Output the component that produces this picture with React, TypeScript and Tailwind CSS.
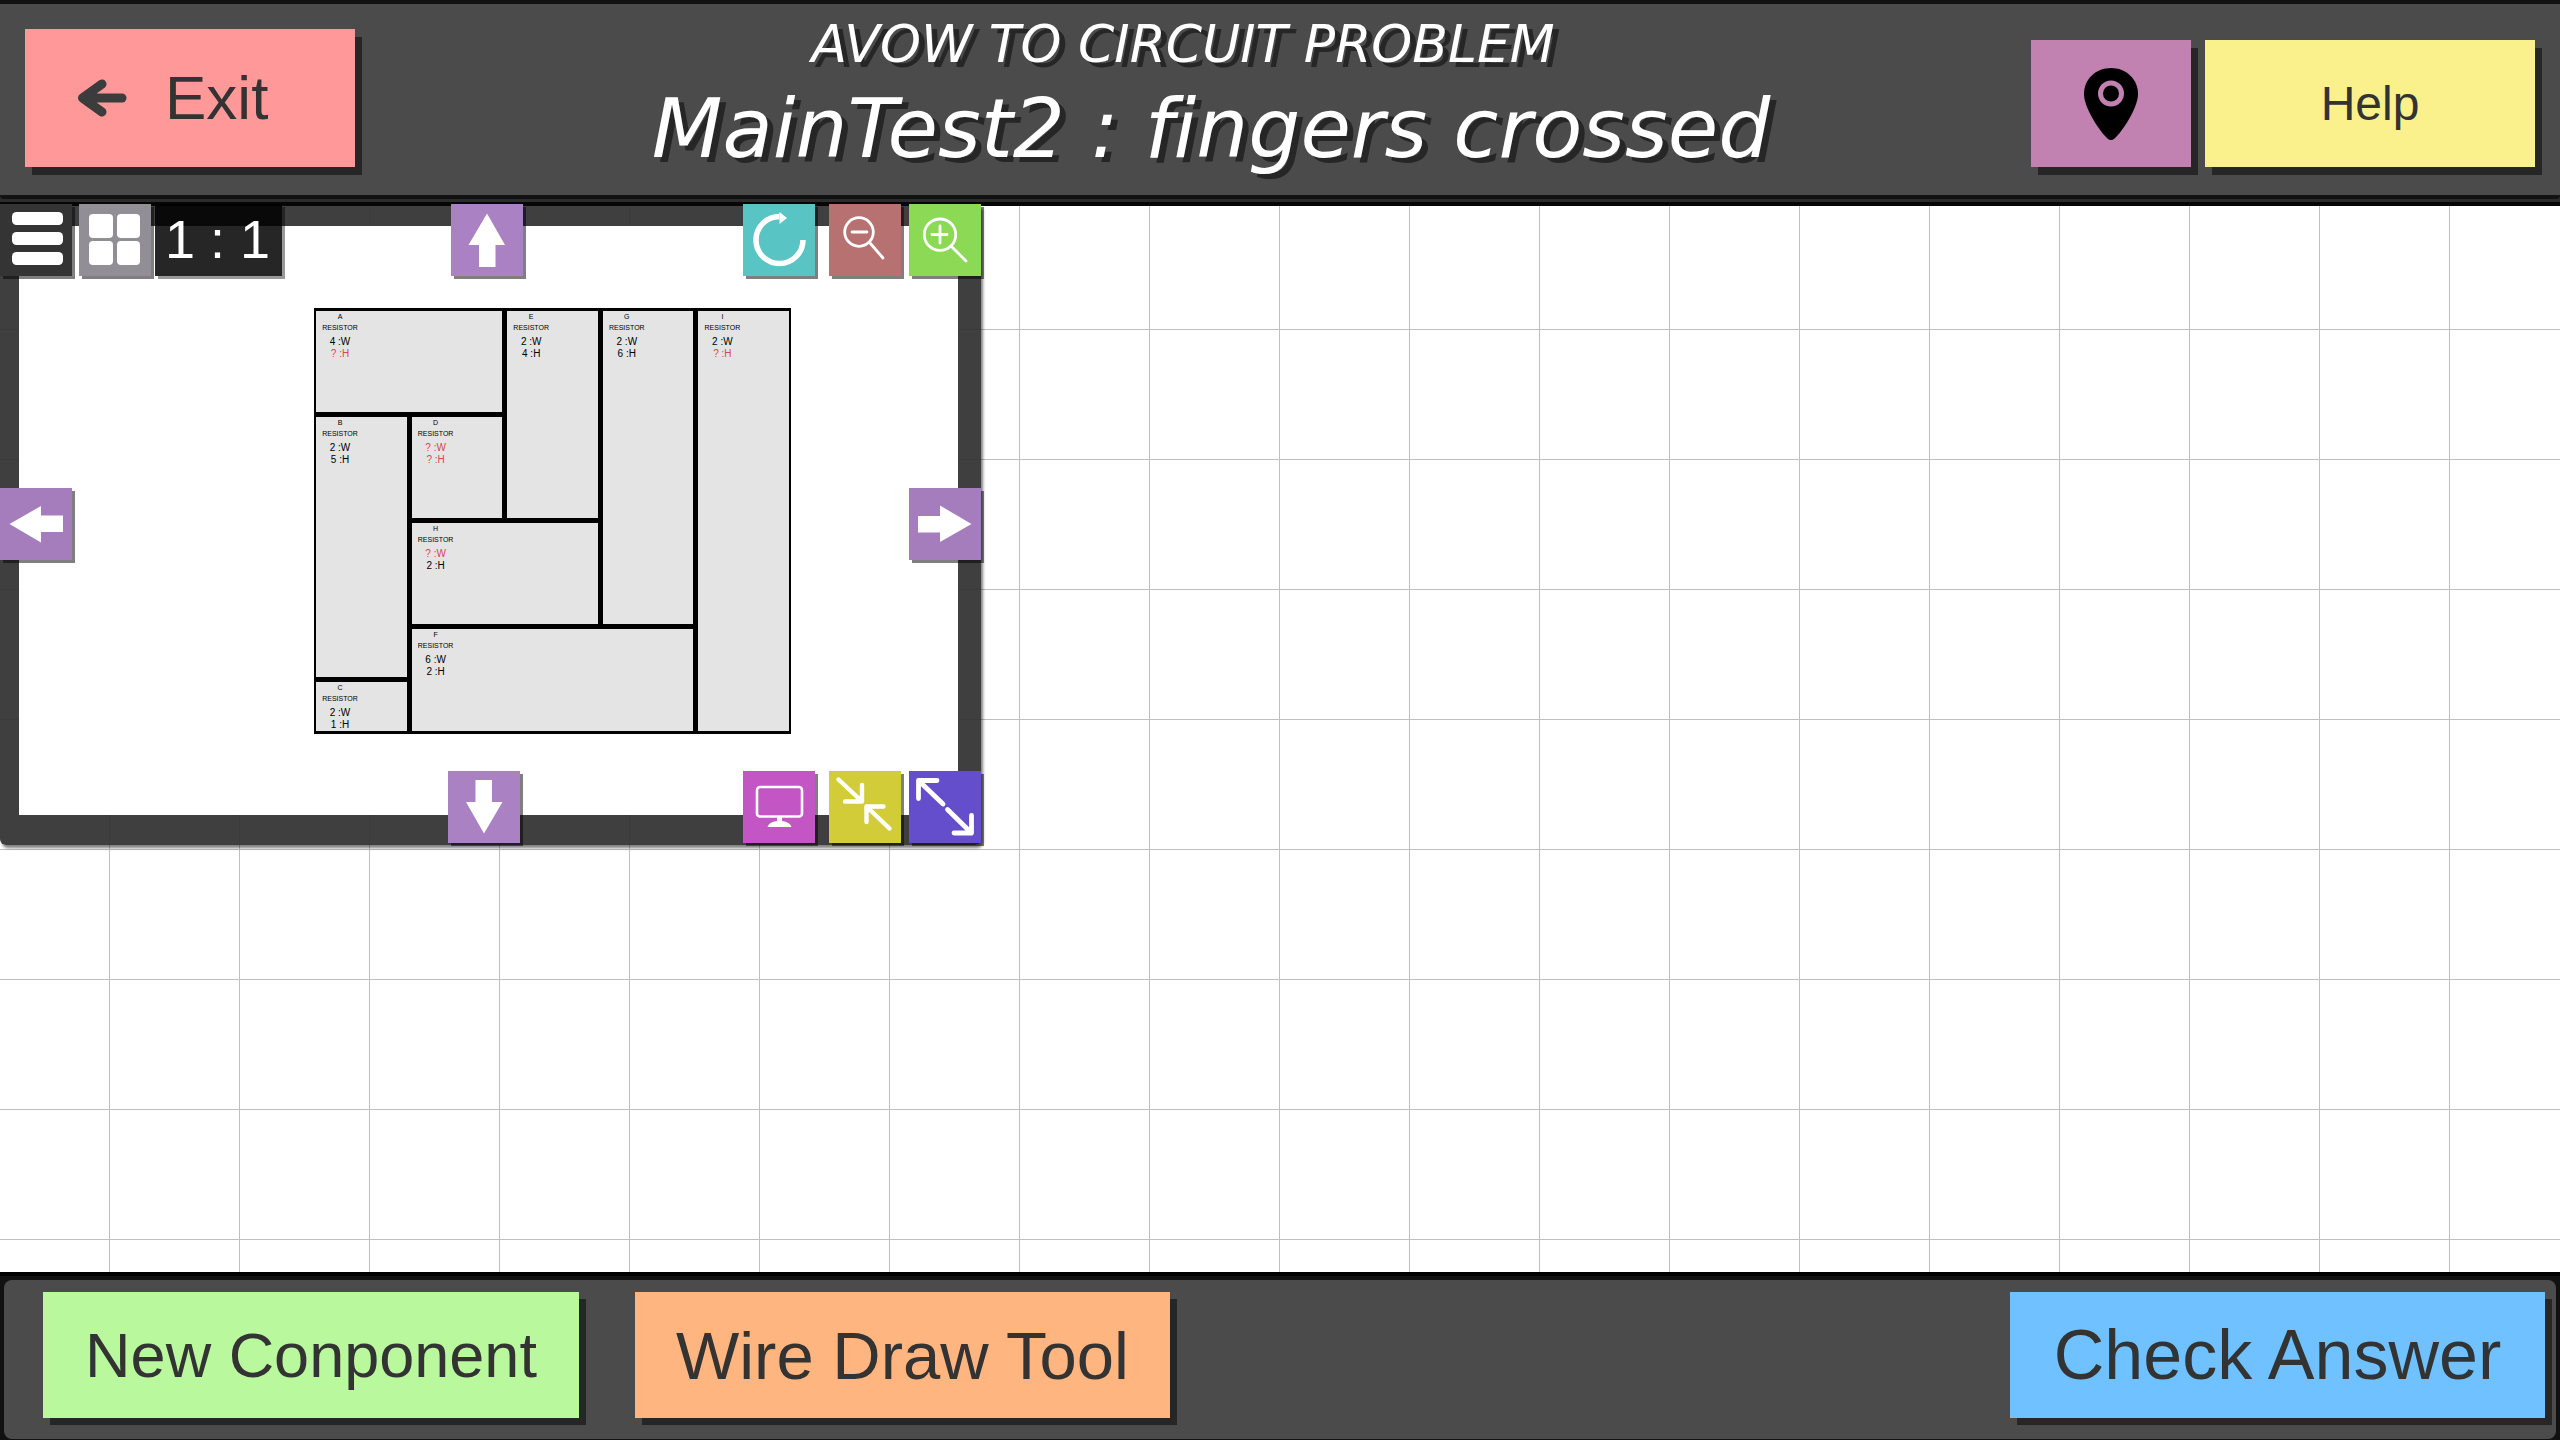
import type { ReactNode } from "react";

type ToolProps = { label: string; className: string; children: ReactNode };

function Tool({ label, className, children }: ToolProps) {
  return (
    <button
      type="button"
      aria-label={label}
      className={`size-[72px] shrink-0 shadow-[3px_3px_0_rgba(0,0,0,0.5)] ${className}`}
    >
      <svg viewBox="0 0 72 72" className="block size-full" fill="none" stroke="none" strokeLinecap="round" strokeLinejoin="round">
        {children}
      </svg>
    </button>
  );
}

function BlockArrow({ turn }: { turn: number }) {
  return <path fill="#fff" transform={`rotate(${turn} 36 36)`} d="M36 9.5 54 41H44.500V63H28V41H17.500Z" />;
}

type Cell = { name: string; w: string; h: string; place: string };

const cells: Cell[] = [
  { name: "A", w: "4", h: "?", place: "col-start-1 col-span-2 row-start-1" },
  { name: "E", w: "2", h: "4", place: "col-start-3 row-start-1 row-span-2" },
  { name: "G", w: "2", h: "6", place: "col-start-4 row-start-1 row-span-3" },
  { name: "I", w: "2", h: "?", place: "col-start-5 row-start-1 row-span-5" },
  { name: "B", w: "2", h: "5", place: "col-start-1 row-start-2 row-span-3" },
  { name: "D", w: "?", h: "?", place: "col-start-2 row-start-2" },
  { name: "H", w: "?", h: "2", place: "col-start-2 col-span-2 row-start-3" },
  { name: "F", w: "6", h: "2", place: "col-start-2 col-span-3 row-start-4 row-span-2" },
  { name: "C", w: "2", h: "1", place: "col-start-1 row-start-5" },
];

function Measure({ value, unit }: { value: string; unit: string }) {
  return (
    <p className={`text-[10px] leading-[12px] ${value === "?" ? "text-[#d04a4a]" : "text-black"}`}>
      {value} :{unit}
    </p>
  );
}

function AvowDiagram() {
  return (
    <div className="grid w-[477px] grid-cols-5 grid-rows-[101px_101px_101px_48px_49px] gap-[5px] bg-black px-[2px] py-[3px]">
      {cells.map((c) => (
        <div key={c.name} className={`bg-[#e4e4e4] ${c.place}`}>
          <div className="w-12 text-center">
            <p className="text-[7px] leading-[11px] text-black">{c.name}</p>
            <p className="mb-[3px] text-[7px] leading-[11px] text-black">RESISTOR</p>
            <Measure value={c.w} unit="W" />
            <Measure value={c.h} unit="H" />
          </div>
        </div>
      ))}
    </div>
  );
}

function AvowPanel() {
  return (
    <section
      aria-label="Avow diagram"
      className="absolute left-0 top-0 h-[639px] w-[981px] rounded-b-md bg-[rgba(48,48,48,0.93)] pb-[30px] pl-[19px] pr-[23px] pt-5 shadow-[2px_3px_3px_rgba(0,0,0,0.5)]"
    >
      <div className="flex h-full items-start bg-white pl-[295px] pt-[82px]">
        <AvowDiagram />
      </div>

      <div className="absolute inset-x-0 -top-[2px] bottom-[2px] flex flex-col justify-between">
        <div className="flex items-start justify-between">
          <div className="flex">
            <Tool label="Menu" className="bg-[#343434]">
              <g fill="#fff">
                <rect x="12" y="8" width="51" height="13" rx="4.500" />
                <rect x="12" y="28" width="51" height="13" rx="4.500" />
                <rect x="12" y="48" width="51" height="13" rx="4.500" />
              </g>
            </Tool>
            <Tool label="Grid" className="ml-[7px] bg-[#918f95]">
              <g fill="#fff">
                <rect x="10" y="10" width="24" height="24" rx="4" />
                <rect x="38" y="10" width="23" height="24" rx="4" />
                <rect x="10" y="37" width="24" height="24" rx="4" />
                <rect x="38" y="37" width="23" height="24" rx="4" />
              </g>
            </Tool>
            <output className="ml-1 flex h-[72px] w-[127px] items-center justify-center bg-black/85 pb-[2px] pr-[2px] text-[54px] leading-none text-white shadow-[3px_3px_0_rgba(0,0,0,0.4)]">
              1 : 1
            </output>
            <div className="ml-[169px] flex">
              <Tool label="Move up" className="bg-[#aa81c2]">
                <BlockArrow turn={0} />
              </Tool>
            </div>
          </div>
          <div className="flex">
            <Tool label="Reset view" className="bg-[#59c4c4]">
              <path d="M60 36A23.500 23.500 0 1 1 36.500 12.500" stroke="#fff" strokeWidth="5.500" strokeLinecap="butt" />
              <path d="M36.500 8 44 14 36.500 20Z" fill="#fff" />
            </Tool>
            <Tool label="Zoom out" className="ml-[14px] bg-[#b87171]">
              <g stroke="#fff" strokeWidth="2.800">
                <circle cx="30" cy="28" r="14.300" />
                <path d="M23 28H38M41 39 54 54" />
              </g>
            </Tool>
            <Tool label="Zoom in" className="ml-2 bg-[#8bd955]">
              <g stroke="#fff" strokeWidth="2.800">
                <circle cx="31" cy="30.700" r="15.700" />
                <path d="M23 30.500H38M31 22V39M42.500 42.500 57 57" />
              </g>
            </Tool>
          </div>
        </div>

        <div className="flex justify-between">
          <Tool label="Move left" className="bg-[#a57dbc]">
            <BlockArrow turn={-90} />
          </Tool>
          <Tool label="Move right" className="bg-[#a57dbc]">
            <BlockArrow turn={90} />
          </Tool>
        </div>

        <div className="flex justify-end">
          <Tool label="Move down" className="mr-[223px] bg-[#aa81c2]">
            <BlockArrow turn={180} />
          </Tool>
          <Tool label="Screen" className="bg-[#c355c5]">
            <rect x="14" y="16" width="45" height="29.500" rx="3" stroke="#fff" strokeWidth="2.600" />
            <path d="M34 46H39V50Q47 51 48.500 56H24.500Q26 51 34 50Z" fill="#fff" />
          </Tool>
          <Tool label="Shrink" className="ml-[14px] bg-[#d3cc39]">
            <path d="M9.500 8.500 33 30.500M33 14V30.500H16M60.500 57.500 37.500 35.500M54.500 35.500H37.500V51" stroke="#fff" strokeWidth="4.400" />
          </Tool>
          <Tool label="Enlarge" className="ml-2 bg-[#654ecb]">
            <path d="M34 33 9.500 9.500M28 9.500H9.500V27.500M38.500 38.500 62.500 62M62.500 44.500V62H45" stroke="#fff" strokeWidth="4.800" />
          </Tool>
        </div>
      </div>
    </section>
  );
}

export default function App() {
  return (
    <div className="flex min-h-screen flex-col bg-[#0b0b0b] font-['Liberation_Sans',Arial,sans-serif] text-[#333]">
      <header className="border-b-[4px] border-[#060606] bg-[#2c2c2c] pb-[3px]">
        <div className="flex items-start rounded-b border-y-[4px] border-[#121212] bg-[#4b4b4b] pb-6 pl-[25px] pr-[25px] pt-[25px]">
          <button
            type="button"
            className="flex h-[138px] w-[330px] items-center bg-[#ff9999] pl-[52px] text-[62px] leading-none shadow-[7px_8px_0_#262626]"
          >
            <svg viewBox="0 0 50 38" className="mr-[38px] h-[38px] w-[50px]" fill="none" stroke="#3c3c3c" strokeWidth="9" strokeLinecap="round" strokeLinejoin="round" aria-hidden="true">
              <path d="M45 19H8" />
              <path d="M25 5 5.500 19 25 33" />
              <path d="M19 12V26L6 19Z" fill="#3c3c3c" strokeWidth="2" />
            </svg>
            Exit
          </button>
          <div className="-mt-1 flex-1 text-center font-['DejaVu_Sans',sans-serif] text-white italic [font-variant-ligatures:none]">
            <p className="pr-5 text-[52px] leading-[38px] [text-shadow:6px_5px_0_#262626]">AVOW TO CIRCUIT PROBLEM</p>
            <h1 className="mt-6 pl-9 text-[82px] leading-[84px] [text-shadow:6px_5px_0_#262626]">MainTest2 : fingers crossed</h1>
          </div>
          <div className="mt-[11px] flex gap-[14px]">
            <button
              type="button"
              aria-label="Location"
              className="flex h-[127px] w-[160px] items-center justify-center bg-[#c181b1] shadow-[7px_8px_0_#262626]"
            >
              <svg viewBox="0 0 54 72" className="h-[72px] w-[54px]" aria-hidden="true">
                <path d="M27 0C42 0 54 11 54 26C54 40 38 64 30.500 70.500Q27 73.500 23.500 70.500C16 64 0 40 0 26C0 11 12 0 27 0Z" fill="#000" />
                <circle cx="27" cy="25.500" r="10.500" fill="none" stroke="#c181b1" strokeWidth="5" />
              </svg>
            </button>
            <button type="button" className="h-[127px] w-[330px] bg-[#faf18d] text-[48px] leading-none shadow-[7px_8px_0_#262626]">
              Help
            </button>
          </div>
        </div>
      </header>

      <main className="relative flex-1 bg-white bg-[linear-gradient(to_right,#bfbfbf_1px,transparent_1px),linear-gradient(to_bottom,#bfbfbf_1px,transparent_1px)] bg-[size:130px_130px] bg-[position:109px_123px]">
        <AvowPanel />
      </main>

      <footer className="border-t-[4px] border-black bg-[#111] px-1 pb-px pt-1">
        <div className="flex rounded-lg bg-[#4b4b4b] pb-[21px] pl-[39px] pr-[11px] pt-3">
          <button type="button" className="h-[126px] w-[536px] bg-[#b9f89d] text-[63px] leading-none shadow-[7px_7px_0_#262626]">
            New Conponent
          </button>
          <button type="button" className="ml-14 h-[126px] w-[535px] bg-[#ffb57f] text-[67px] leading-none shadow-[7px_7px_0_#262626]">
            Wire Draw Tool
          </button>
          <button type="button" className="ml-auto h-[126px] w-[535px] bg-[#6fc1ff] text-[70px] leading-none shadow-[7px_7px_0_#262626]">
            Check Answer
          </button>
        </div>
      </footer>
    </div>
  );
}
